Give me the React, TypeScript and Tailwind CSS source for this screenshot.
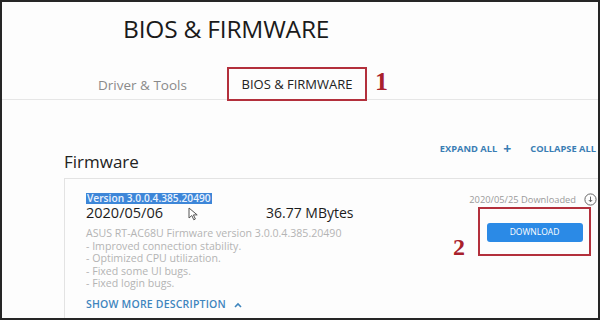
import React from "react";

export default function App() {
  const font = { fontFamily: '"Open Sans", "Noto Sans", sans-serif' };
  return (
    <div
      className="w-[600px] h-[320px] overflow-hidden border-2 border-[#262626] bg-[#fdfdfd] flex flex-col"
      style={font}
    >
      {/* Title */}
      <div className="shrink-0 pl-[121px] pt-[12px] h-[52px] text-[24.5px] leading-[30px] tracking-[-0.2px] font-normal text-[#1a1a1a]">
        BIOS &amp; FIRMWARE
      </div>

      {/* Tabs */}
      <div className="shrink-0 relative h-[46px] border-b border-[#e6e6e6] flex items-end">
        <div className="pl-[96px] w-[225px] pb-[4px] text-[13.5px] text-[#8a8a8a]">Driver &amp; Tools</div>
        <div className="h-[34px] w-[140px] border-2 border-[#b3303c] flex items-center justify-center pt-[2px] text-[13px] text-[#222] -mb-[2px]">
          BIOS &amp; FIRMWARE
        </div>
        <div
          className="ml-[8px] mb-[3px] text-[26px] leading-[28px] font-bold text-[#a8202c]"
          style={{ fontFamily: '"Liberation Serif", serif' }}
        >
          1
        </div>
      </div>

      {/* Firmware header */}
      <div className="shrink-0 flex items-start pl-[62px] pt-[42px] h-[78px]">
        <div className="text-[17px] leading-[24px] text-[#222] mt-[8px]">Firmware</div>
        <div className="ml-auto flex gap-[19px] text-[9.3px] font-bold text-[#3a7db4] mr-[2px] whitespace-nowrap">
          <span className="flex items-center gap-[6px]">
            EXPAND ALL <span className="text-[14px] leading-[10px] font-bold">+</span>
          </span>
          <span>COLLAPSE ALL</span>
        </div>
      </div>

      {/* Card */}
      <div className="ml-[62px] flex-1 min-h-0 border-l border-t border-[#e3e3e3] flex">
        <div className="pl-[21px] pt-[14px] w-[320px]">
          <div className="flex h-[12px]">
            <span className="bg-[#3d86d8] text-[#e9f2ff] text-[10.2px] leading-[11px] h-[11px] font-semibold px-[1px]">
              Version 3.0.0.4.385.20490
            </span>
          </div>
          <div className="flex items-center text-[14.5px] leading-[16px] text-[#1c1c1c]">
            <span className="w-[102px]">2020/05/06</span>
            <svg width="12" height="14" viewBox="0 0 12 14" className="mt-[2px]">
              <path d="M1 1 L1 11 L3.8 8.5 L5.8 12.8 L7.4 12 L5.4 7.9 L9.2 7.9 Z" fill="#fff" stroke="#555" strokeWidth="1" strokeLinejoin="round" />
            </svg>
            <span className="ml-[66px] text-[14px] whitespace-nowrap">36.77 MBytes</span>
          </div>
          <div className="mt-[6px] text-[10.6px] leading-[12.6px] text-[#b4b4b4] whitespace-nowrap">
            <div>ASUS RT-AC68U Firmware version 3.0.0.4.385.20490</div>
            <div>- Improved connection stability.</div>
            <div>- Optimized CPU utilization.</div>
            <div>- Fixed some UI bugs.</div>
            <div>- Fixed login bugs.</div>
          </div>
          <div className="mt-[7px] flex items-center gap-[8px] text-[10.5px] font-semibold text-[#3f85bd] tracking-[0.2px]">
            SHOW MORE DESCRIPTION
            <svg width="8" height="6" viewBox="0 0 8 6">
              <path d="M1 5 L4 2 L7 5" fill="none" stroke="#3f85bd" strokeWidth="1.6" />
            </svg>
          </div>
        </div>

        <div className="flex-1 relative">
          <div className="absolute right-[1px] top-[14px] flex items-center gap-[8px] text-[9.3px] text-[#9a9a9a] whitespace-nowrap">
            2020/05/25 Downloaded
            <svg width="13" height="13" viewBox="0 0 13 13">
              <circle cx="6.5" cy="6.5" r="5.6" fill="none" stroke="#666" strokeWidth="1" />
              <path d="M6.5 3.6 V8.6 M4.8 7 L6.5 8.8 L8.2 7" fill="none" stroke="#666" strokeWidth="1" />
            </svg>
          </div>
          <div className="absolute left-[93px] top-[28px] w-[113px] h-[49px] border-2 border-[#b3303c] flex items-center justify-center">
            <div className="w-[96px] h-[19px] mt-[2px] rounded-[3px] bg-[#2b8ae6] text-white text-[8.5px] flex items-center justify-center">
              DOWNLOAD
            </div>
          </div>
          <div
            className="absolute left-[68px] top-[54px] text-[24px] leading-[28px] font-bold text-[#a8202c]"
            style={{ fontFamily: '"Liberation Serif", serif' }}
          >
            2
          </div>
        </div>
      </div>
    </div>
  );
}
